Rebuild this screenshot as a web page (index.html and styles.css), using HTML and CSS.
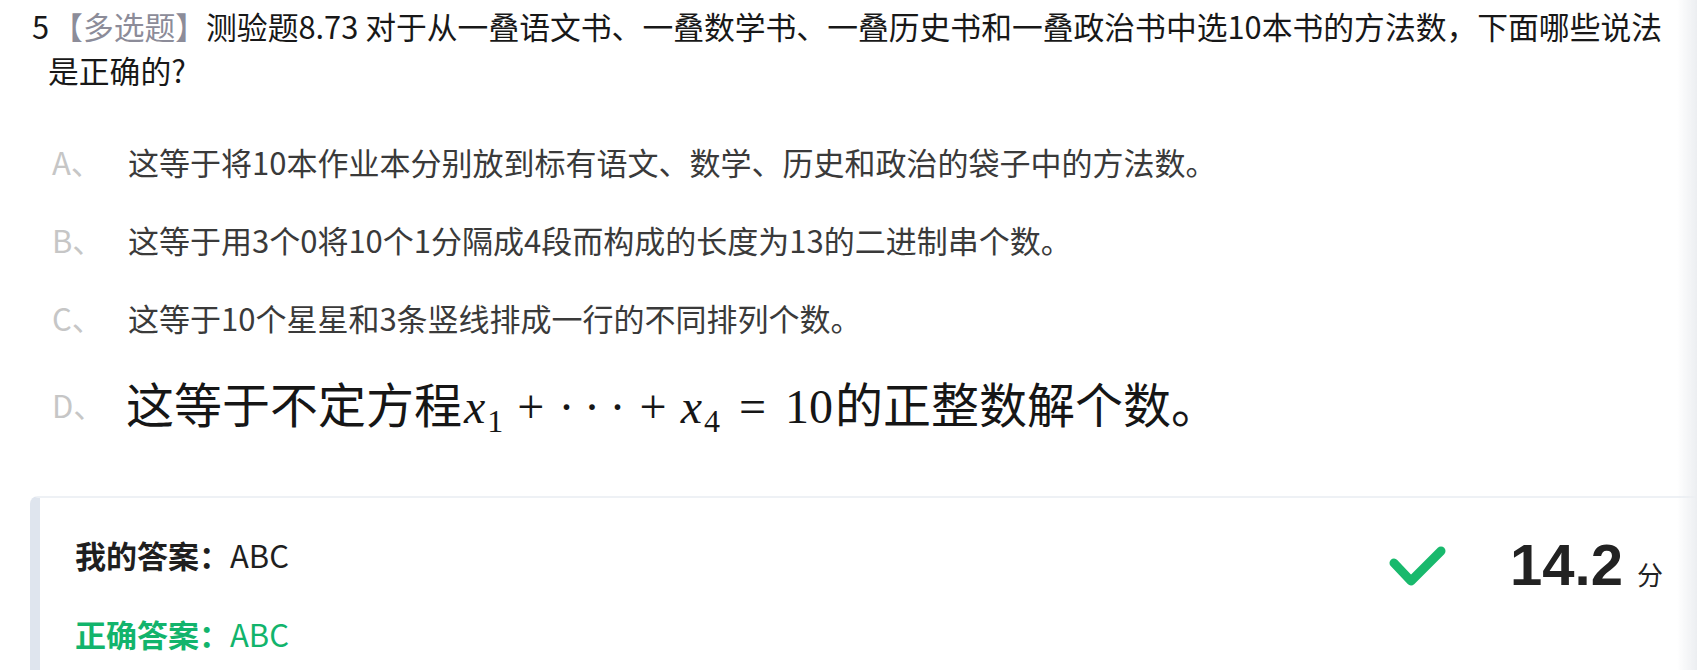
FILE: index.html
```html
<!DOCTYPE html>
<html lang="zh-CN">
<head>
<meta charset="utf-8">
<title>测验题</title>
<link rel="stylesheet" href="styles.css">
</head>
<body>
<div class="page">
  <div class="title">5<span class="qtype">【多选题】</span>测验题8.73 对于从一叠语文书、一叠数学书、一叠历史书和一叠政治书中选10本书的方法数，下面哪些说法是正确的?</div>
  <ul class="options">
    <li class="option"><span class="label">A、</span><span class="text">这等于将10本作业本分别放到标有语文、数学、历史和政治的袋子中的方法数。</span></li>
    <li class="option"><span class="label">B、</span><span class="text">这等于用3个0将10个1分隔成4段而构成的长度为13的二进制串个数。</span></li>
    <li class="option"><span class="label">C、</span><span class="text">这等于10个星星和3条竖线排成一行的不同排列个数。</span></li>
    <li class="option option-big"><span class="label">D、</span><span class="text formula">这等于不定方程<span class="math"><i>x</i><sub>1</sub><span class="op">+</span><span class="cdots">···</span><span class="op">+</span><i>x</i><sub>4</sub><span class="rel">=</span>10</span>的正整数解个数。</span></li>
  </ul>
  <div class="answer">
    <div class="answer-lines">
      <div class="ans mine"><b>我的答案：</b>ABC</div>
      <div class="ans right"><b>正确答案：</b>ABC</div>
    </div>
    <div class="result">
      <svg class="check" width="60" height="44" viewBox="0 0 60 44"><path d="M6 18 L23 36 L53 6" fill="none" stroke="#19b96d" stroke-width="9" stroke-linecap="round" stroke-linejoin="round"/></svg>
      <div class="score"><span class="num">14.2</span><span class="unit">分</span></div>
    </div>
  </div>
</div>
<div class="edge-shade"></div>
</body>
</html>
```

FILE: styles.css
```css
html, body {
  margin: 0;
  padding: 0;
  background: #ffffff;
  overflow: hidden;
}
body {
  font-family: "Noto Sans CJK SC", "Noto Sans", sans-serif;
  color: #1a1a1a;
}
.page {
  padding-top: 4px;
}
.title {
  font-size: 30.8px;
  line-height: 44px;
  padding: 0 24px 0 48px;
  text-indent: -16px;
  color: #181818;
}
.qtype {
  color: #8c8c99;
  margin-left: 3px;
}
.options {
  list-style: none;
  margin: 30px 0 0 0;
  padding: 0;
}
.option {
  display: flex;
  align-items: center;
  height: 78px;
  font-size: 31px;
  padding-left: 52px;
}
.option-big {
  height: 96px;
}
.label {
  width: 76px;
  flex: none;
  color: #c6c6c6;
}
.text {
  color: #3a3a3a;
}
.formula {
  font-size: 48px;
  color: #161616;
  line-height: 60px;
  margin-left: -2px;
}
.math {
  font-family: "Liberation Serif", "DejaVu Serif", serif;
  font-size: 48px;
  margin: 0 2px 0 2px;
}
.math i {
  font-style: italic;
  margin-right: 2px;
}
.math sub {
  font-size: 32px;
  vertical-align: -9px;
  line-height: 0;
}
.op {
  margin: 0 14px;
}
.rel {
  margin: 0 19px;
}
.cdots {
  letter-spacing: 0.2em;
  margin-right: -0.2em;
}
.answer {
  margin: 44px 0 0 30px;
  border-left: 10px solid #dfe5ee;
  border-top: 2px solid #eef1f5;
  border-top-left-radius: 8px;
  display: flex;
  justify-content: space-between;
  align-items: flex-start;
  padding: 37px 34px 30px 35px;
}
.answer-lines {
  display: flex;
  flex-direction: column;
  gap: 39px;
}
.ans {
  font-size: 31px;
  line-height: 40px;
  color: #1f1f1f;
}
.ans b {
  font-weight: 700;
}
.ans.right {
  color: #12b46c;
}
.result {
  display: flex;
  align-items: center;
  gap: 62px;
}
.check {
  display: block;
  margin-top: 4px;
}
.score {
  display: flex;
  align-items: baseline;
  color: #222222;
}
.num {
  font-family: "Liberation Sans", Arial, sans-serif;
  font-weight: 700;
  font-size: 58px;
  line-height: 60px;
}
.unit {
  font-size: 26px;
  margin-left: 14px;
}
.edge-shade {
  position: fixed;
  top: 0;
  right: 0;
  width: 20px;
  height: 100%;
  background: linear-gradient(to right, rgba(238, 239, 242, 0), #eceef1);
  pointer-events: none;
}
```
